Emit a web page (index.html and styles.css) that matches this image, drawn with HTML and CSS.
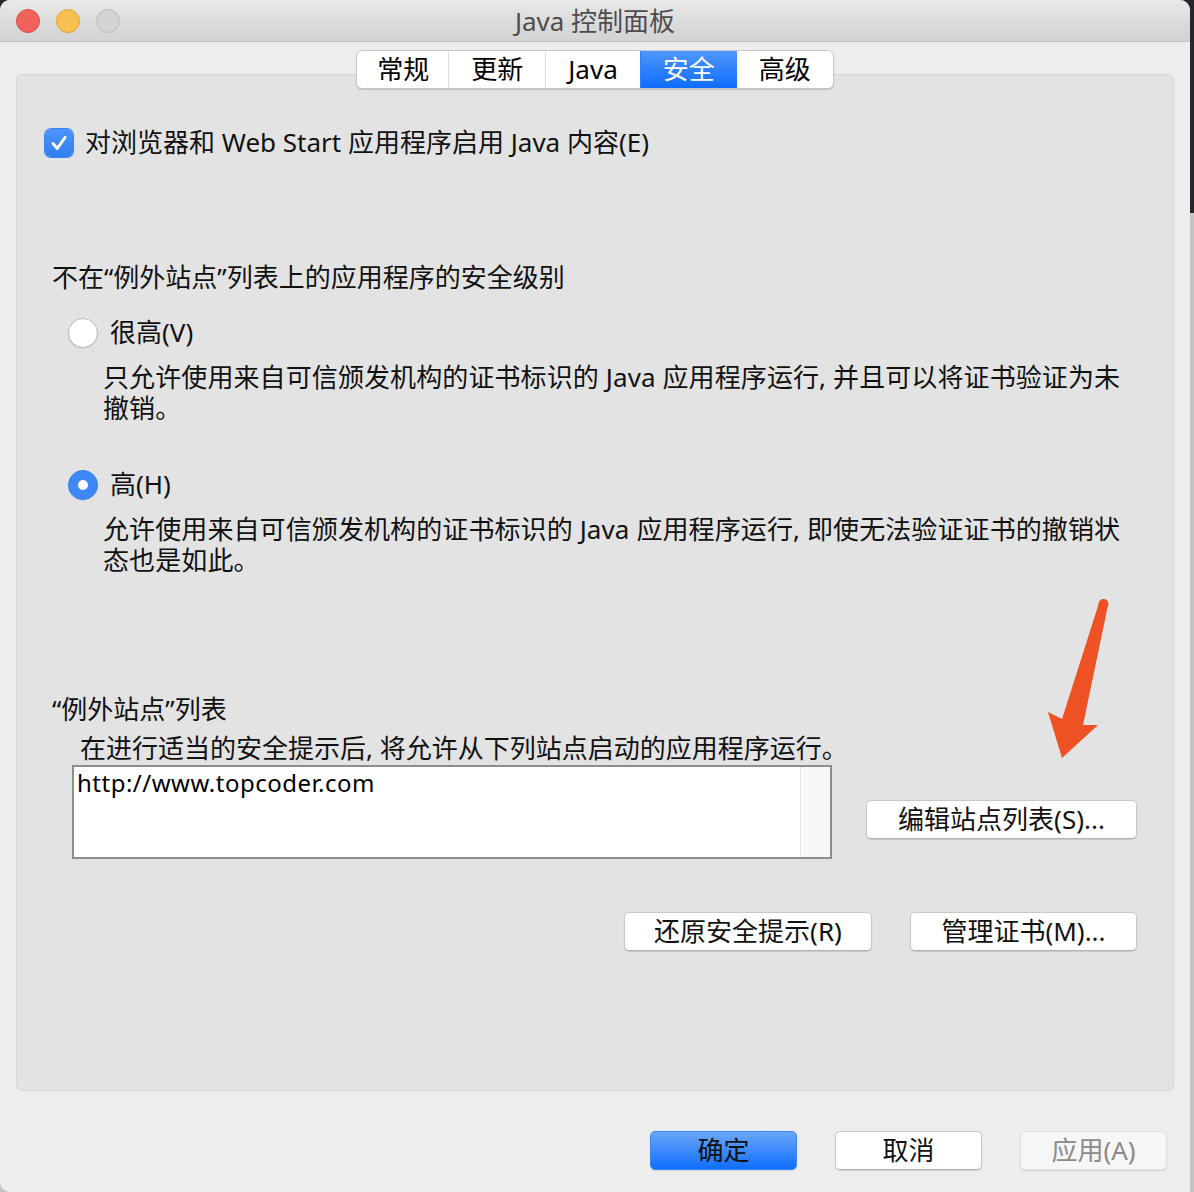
FILE: index.html
```html
<!DOCTYPE html>
<html lang="zh-CN">
<head>
    <meta charset="UTF-8">
    <title>Java 控制面板</title>
    <link rel="stylesheet" href="styles.css">
</head>
<body>
<div class="window">

    <div class="titlebar">
        <div class="lights">
            <span class="light red"></span>
            <span class="light yellow"></span>
            <span class="light gray"></span>
        </div>
        <div class="title">Java 控制面板</div>
        <div></div>
    </div>

    <div class="content">
        <div class="tabs">
            <div class="tab">常规</div>
            <div class="tab">更新</div>
            <div class="tab">Java</div>
            <div class="tab active">安全</div>
            <div class="tab">高级</div>
        </div>

        <div class="panel">
            <div class="check_row">
                <span class="checkbox">
                    <svg width="28" height="28" viewBox="0 0 28 28">
                        <path d="M8 14.5 L12.2 19.5 L20 8.5" fill="none" stroke="#fff" stroke-width="3" stroke-linecap="round" stroke-linejoin="round"/>
                    </svg>
                </span>
                <span>对浏览器和 Web Start 应用程序启用 Java 内容(E)</span>
            </div>

            <div class="section_title">不在“例外站点”列表上的应用程序的安全级别</div>

            <div class="radio_row first">
                <span class="radio"></span>
                <span>很高(V)</span>
            </div>
            <div class="desc">
                <div>只允许使用来自可信颁发机构的证书标识的 Java 应用程序运行, 并且可以将证书验证为未</div>
                <div>撤销。</div>
            </div>

            <div class="radio_row second">
                <span class="radio checked"></span>
                <span>高(H)</span>
            </div>
            <div class="desc">
                <div>允许使用来自可信颁发机构的证书标识的 Java 应用程序运行, 即使无法验证证书的撤销状</div>
                <div>态也是如此。</div>
            </div>

            <div class="section_title sites_title">“例外站点”列表</div>
            <div class="note">在进行适当的安全提示后, 将允许从下列站点启动的应用程序运行。</div>

            <div class="sites_row">
                <div class="site_list">
                    <div class="site_text">http://www.topcoder.com</div>
                    <div class="scroll_track"></div>
                </div>
                <button class="btn edit_btn">编辑站点列表(S)...</button>
            </div>

            <div class="panel_buttons">
                <button class="btn restore_btn">还原安全提示(R)</button>
                <button class="btn cert_btn">管理证书(M)...</button>
            </div>
        </div>

        <div class="footer">
            <button class="btn footer_btn primary">确定</button>
            <button class="btn footer_btn">取消</button>
            <button class="btn footer_btn disabled">应用(A)</button>
        </div>
    </div>

    <!-- annotation arrow -->
    <svg class="arrow" width="80" height="170" viewBox="0 0 80 170">
        <circle cx="63.5" cy="9" r="5" fill="#ee5124"/>
        <polygon points="59,8 68,10 43,130 58,130 22,163 8,117 22,124" fill="#ee5124"/>
    </svg>
</div>
</body>
</html>
```

FILE: styles.css
```css
html, body {
    margin: 0;
    height: 100%;
}

body {
    background: linear-gradient(#24282c 0, #24282c 213px, #c4c4c4 213px);
    font-family: "Noto Sans", "Noto Sans CJK SC", sans-serif;
    color: #111;
    overflow: hidden;
}

.window {
    position: relative;
    width: 1190px;
    height: 1192px;
    background-color: #ededed;
    border-radius: 10px 10px 0 10px;
    overflow: hidden;
}

.titlebar {
    display: grid;
    grid-template-columns: 1fr auto 1fr;
    align-items: center;
    height: 41px;
    border-bottom: 1px solid #c2c2c2;
    background: linear-gradient(#e9e8e9, #d3d2d3);
}

.lights {
    display: flex;
    gap: 16px;
    margin-left: 16px;
}

.light {
    width: 24px;
    height: 24px;
    border-radius: 50%;
    box-sizing: border-box;
}

.red {
    background-color: #f1625b;
    border: 1px solid #dc4b44;
}

.yellow {
    background-color: #f8c04f;
    border: 1px solid #dfa236;
}

.gray {
    background-color: #d3d3d3;
    border: 1px solid #bdbdbd;
}

.title {
    font-size: 26px;
    line-height: 30px;
    color: #4d4d4d;
}

.content {
    padding: 8px 16px 0;
}

/* tabs */
.tabs {
    position: relative;
    z-index: 1;
    display: flex;
    width: fit-content;
    margin: 0 auto;
    border: 1px solid #c6c6c6;
    border-radius: 6px;
    background-color: #fff;
    box-shadow: 0 1px 1px rgba(0, 0, 0, 0.18);
    overflow: hidden;
}

.tab {
    height: 37px;
    line-height: 37px;
    padding: 0 22px;
    font-size: 26px;
    color: #000;
    border-left: 1px solid #dedede;
}

.tab:first-child {
    border-left: none;
    padding: 0 19px 0 20px;
}

.tab.active {
    background: linear-gradient(#4f97fb, #0f6cfd);
    color: #fff;
    border-left-color: #2f7ff8;
}

.tab.active + .tab {
    border-left: none;
}

/* panel */
.panel {
    box-sizing: border-box;
    height: 1017px;
    margin-top: -15px;
    padding: 52px 36px 0 28px;
    border: 1px solid #d6d6d6;
    border-radius: 6px;
    background-color: #e3e3e3;
    font-size: 26px;
    line-height: 31px;
}

.check_row, .radio_row {
    display: flex;
    align-items: center;
    gap: 12px;
    height: 31px;
}

.checkbox {
    display: block;
    width: 28px;
    height: 28px;
    border-radius: 6px;
    background: linear-gradient(#4d94f8, #2f7ff0);
    box-shadow: 0 0 0 1px #3a86f2;
}

.checkbox svg {
    display: block;
}

.section_title {
    margin-top: 104px;
    margin-left: 7px;
}

.radio_row {
    margin-left: 23px;
}

.radio_row.first {
    margin-top: 24px;
}

.radio_row.second {
    margin-top: 45px;
}

.radio {
    box-sizing: border-box;
    display: block;
    width: 30px;
    height: 30px;
    border-radius: 50%;
    background-color: #fff;
    border: 1px solid #b8b8b8;
    box-shadow: 0 1px 1px rgba(0, 0, 0, 0.08);
}

.radio.checked {
    position: relative;
    background-color: #3b88f6;
    border-color: #3380f0;
}

.radio.checked::after {
    content: "";
    position: absolute;
    left: 9px;
    top: 9px;
    width: 10px;
    height: 10px;
    border-radius: 50%;
    background-color: #fff;
}

.desc {
    margin-top: 14px;
    margin-left: 58px;
    letter-spacing: 0.1px;
}

.sites_title {
    margin-top: 118px;
}

.note {
    margin-top: 8px;
    margin-left: 35px;
}

.sites_row {
    display: flex;
    align-items: center;
    margin-top: 1px;
    margin-left: 27px;
}

.site_list {
    box-sizing: border-box;
    display: flex;
    width: 760px;
    height: 94px;
    border: 2px solid #8d8d8d;
    background-color: #fff;
}

.site_text {
    flex: 1;
    padding: 1px 3px;
    font-size: 24px;
    line-height: 30px;
    letter-spacing: 0.5px;
    color: #000;
}

.scroll_track {
    width: 29px;
    background-color: #f8f8f8;
    border-left: 1px solid #e6e6e6;
}

/* buttons */
.btn {
    box-sizing: border-box;
    height: 39px;
    padding: 0;
    border: 1px solid #c8c8c8;
    border-bottom-color: #b0b0b0;
    border-radius: 5px;
    background-color: #fff;
    box-shadow: 0 1px 1px rgba(0, 0, 0, 0.12);
    font-family: inherit;
    font-size: 26px;
    line-height: 35px;
    color: #111;
}

.edit_btn {
    width: 271px;
    margin-left: 34px;
    margin-top: 14px;
}

.panel_buttons {
    display: flex;
    justify-content: flex-end;
    gap: 38px;
    margin-top: 53px;
}

.restore_btn {
    width: 248px;
}

.cert_btn {
    width: 227px;
}

.footer {
    display: flex;
    justify-content: flex-end;
    gap: 38px;
    margin-top: 40px;
    padding-right: 7px;
}

.footer_btn {
    width: 147px;
}

.footer_btn.primary {
    background: linear-gradient(#6ba6fb, #0f6efd);
    border-color: #3f86f6;
}

.footer_btn.disabled {
    background-color: #f6f6f6;
    border-color: #dedede;
    color: #8a8a8a;
}

.arrow {
    position: absolute;
    left: 1040px;
    top: 595px;
}
```
